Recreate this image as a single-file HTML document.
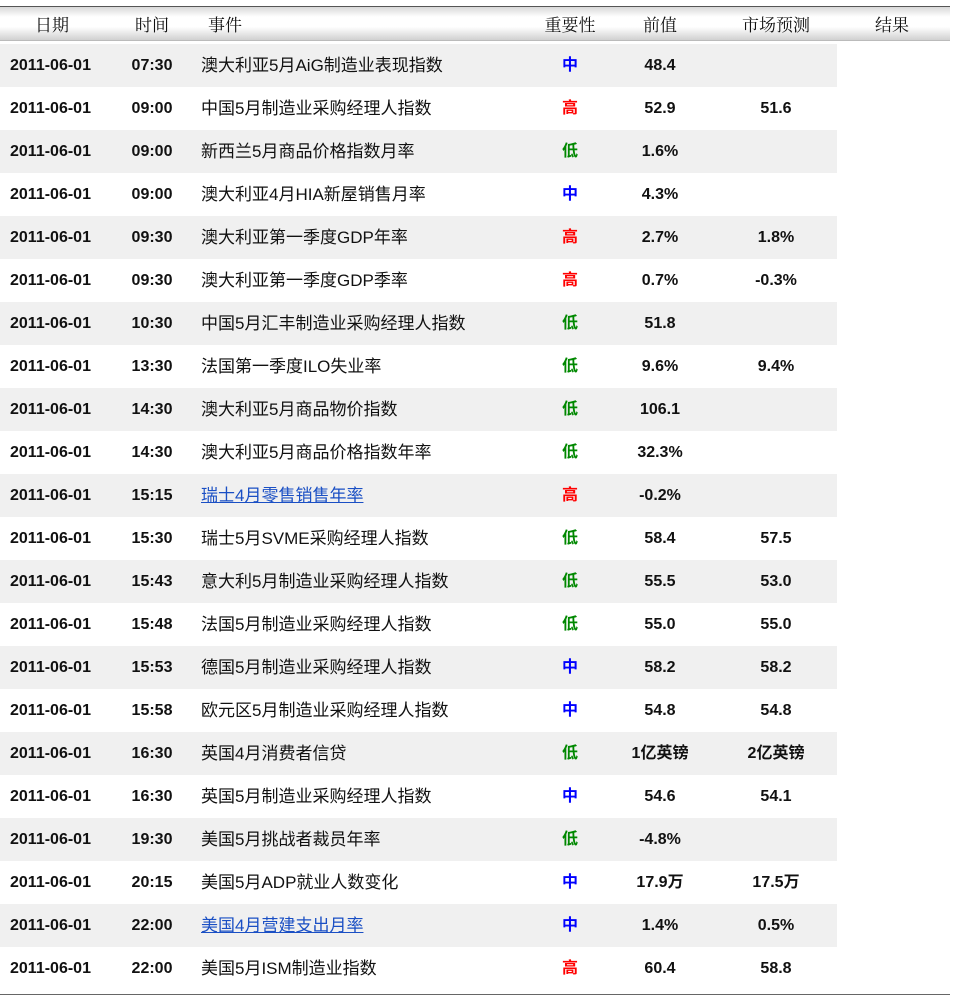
<!DOCTYPE html>
<html><head><meta charset="utf-8"><style>
body{margin:0;background:#fff;width:956px;height:1004px;overflow:hidden;position:relative;font-family:"Liberation Sans","Noto Sans CJK SC",sans-serif;}
.hd{position:absolute;left:0;top:6px;width:950px;height:33px;border-top:1px solid #555;border-bottom:1px solid #bbb;background:linear-gradient(#d8d8d8,#fff 30%,#fff 60%,#d0d0d0);}
.hd span{position:absolute;top:0;line-height:33px;font-family:"Noto Serif CJK SC","WenQuanYi Zen Hei",serif;font-size:17px;color:#111;transform:translateX(-50%);}
.row{position:absolute;left:0;height:43px;width:837px;}
.row.g{background:#f0f0f0;}
.row div{position:absolute;top:0;height:43px;line-height:43px;font-size:16px;color:#111;white-space:nowrap;}
.c{transform:translateX(-50%);font-weight:bold;}
.d{left:10px;font-weight:bold;}
.e{left:201px;font-size:17px!important;}
.e a{color:#1a4fc4;text-decoration:underline;}
.bot{position:absolute;left:0;top:994px;width:950px;border-top:1px solid #666;}
</style></head><body>
<div class="hd">
<span style="left:52px">日期</span><span style="left:152px">时间</span><span style="left:225px">事件</span>
<span style="left:570px">重要性</span><span style="left:660px">前值</span><span style="left:776px">市场预测</span><span style="left:892px">结果</span>
</div>
<div class="row g" style="top:44px"><div class="d">2011-06-01</div><div class="c" style="left:152px">07:30</div><div class="e">澳大利亚5月AiG制造业表现指数</div><div class="c" style="left:570px;color:#00f">中</div><div class="c" style="left:660px">48.4</div></div>
<div class="row" style="top:87px"><div class="d">2011-06-01</div><div class="c" style="left:152px">09:00</div><div class="e">中国5月制造业采购经理人指数</div><div class="c" style="left:570px;color:#f00">高</div><div class="c" style="left:660px">52.9</div><div class="c" style="left:776px">51.6</div></div>
<div class="row g" style="top:130px"><div class="d">2011-06-01</div><div class="c" style="left:152px">09:00</div><div class="e">新西兰5月商品价格指数月率</div><div class="c" style="left:570px;color:#080">低</div><div class="c" style="left:660px">1.6%</div></div>
<div class="row" style="top:173px"><div class="d">2011-06-01</div><div class="c" style="left:152px">09:00</div><div class="e">澳大利亚4月HIA新屋销售月率</div><div class="c" style="left:570px;color:#00f">中</div><div class="c" style="left:660px">4.3%</div></div>
<div class="row g" style="top:216px"><div class="d">2011-06-01</div><div class="c" style="left:152px">09:30</div><div class="e">澳大利亚第一季度GDP年率</div><div class="c" style="left:570px;color:#f00">高</div><div class="c" style="left:660px">2.7%</div><div class="c" style="left:776px">1.8%</div></div>
<div class="row" style="top:259px"><div class="d">2011-06-01</div><div class="c" style="left:152px">09:30</div><div class="e">澳大利亚第一季度GDP季率</div><div class="c" style="left:570px;color:#f00">高</div><div class="c" style="left:660px">0.7%</div><div class="c" style="left:776px">-0.3%</div></div>
<div class="row g" style="top:302px"><div class="d">2011-06-01</div><div class="c" style="left:152px">10:30</div><div class="e">中国5月汇丰制造业采购经理人指数</div><div class="c" style="left:570px;color:#080">低</div><div class="c" style="left:660px">51.8</div></div>
<div class="row" style="top:345px"><div class="d">2011-06-01</div><div class="c" style="left:152px">13:30</div><div class="e">法国第一季度ILO失业率</div><div class="c" style="left:570px;color:#080">低</div><div class="c" style="left:660px">9.6%</div><div class="c" style="left:776px">9.4%</div></div>
<div class="row g" style="top:388px"><div class="d">2011-06-01</div><div class="c" style="left:152px">14:30</div><div class="e">澳大利亚5月商品物价指数</div><div class="c" style="left:570px;color:#080">低</div><div class="c" style="left:660px">106.1</div></div>
<div class="row" style="top:431px"><div class="d">2011-06-01</div><div class="c" style="left:152px">14:30</div><div class="e">澳大利亚5月商品价格指数年率</div><div class="c" style="left:570px;color:#080">低</div><div class="c" style="left:660px">32.3%</div></div>
<div class="row g" style="top:474px"><div class="d">2011-06-01</div><div class="c" style="left:152px">15:15</div><div class="e"><a>瑞士4月零售销售年率</a></div><div class="c" style="left:570px;color:#f00">高</div><div class="c" style="left:660px">-0.2%</div></div>
<div class="row" style="top:517px"><div class="d">2011-06-01</div><div class="c" style="left:152px">15:30</div><div class="e">瑞士5月SVME采购经理人指数</div><div class="c" style="left:570px;color:#080">低</div><div class="c" style="left:660px">58.4</div><div class="c" style="left:776px">57.5</div></div>
<div class="row g" style="top:560px"><div class="d">2011-06-01</div><div class="c" style="left:152px">15:43</div><div class="e">意大利5月制造业采购经理人指数</div><div class="c" style="left:570px;color:#080">低</div><div class="c" style="left:660px">55.5</div><div class="c" style="left:776px">53.0</div></div>
<div class="row" style="top:603px"><div class="d">2011-06-01</div><div class="c" style="left:152px">15:48</div><div class="e">法国5月制造业采购经理人指数</div><div class="c" style="left:570px;color:#080">低</div><div class="c" style="left:660px">55.0</div><div class="c" style="left:776px">55.0</div></div>
<div class="row g" style="top:646px"><div class="d">2011-06-01</div><div class="c" style="left:152px">15:53</div><div class="e">德国5月制造业采购经理人指数</div><div class="c" style="left:570px;color:#00f">中</div><div class="c" style="left:660px">58.2</div><div class="c" style="left:776px">58.2</div></div>
<div class="row" style="top:689px"><div class="d">2011-06-01</div><div class="c" style="left:152px">15:58</div><div class="e">欧元区5月制造业采购经理人指数</div><div class="c" style="left:570px;color:#00f">中</div><div class="c" style="left:660px">54.8</div><div class="c" style="left:776px">54.8</div></div>
<div class="row g" style="top:732px"><div class="d">2011-06-01</div><div class="c" style="left:152px">16:30</div><div class="e">英国4月消费者信贷</div><div class="c" style="left:570px;color:#080">低</div><div class="c" style="left:660px">1亿英镑</div><div class="c" style="left:776px">2亿英镑</div></div>
<div class="row" style="top:775px"><div class="d">2011-06-01</div><div class="c" style="left:152px">16:30</div><div class="e">英国5月制造业采购经理人指数</div><div class="c" style="left:570px;color:#00f">中</div><div class="c" style="left:660px">54.6</div><div class="c" style="left:776px">54.1</div></div>
<div class="row g" style="top:818px"><div class="d">2011-06-01</div><div class="c" style="left:152px">19:30</div><div class="e">美国5月挑战者裁员年率</div><div class="c" style="left:570px;color:#080">低</div><div class="c" style="left:660px">-4.8%</div></div>
<div class="row" style="top:861px"><div class="d">2011-06-01</div><div class="c" style="left:152px">20:15</div><div class="e">美国5月ADP就业人数变化</div><div class="c" style="left:570px;color:#00f">中</div><div class="c" style="left:660px">17.9万</div><div class="c" style="left:776px">17.5万</div></div>
<div class="row g" style="top:904px"><div class="d">2011-06-01</div><div class="c" style="left:152px">22:00</div><div class="e"><a>美国4月营建支出月率</a></div><div class="c" style="left:570px;color:#00f">中</div><div class="c" style="left:660px">1.4%</div><div class="c" style="left:776px">0.5%</div></div>
<div class="row" style="top:947px"><div class="d">2011-06-01</div><div class="c" style="left:152px">22:00</div><div class="e">美国5月ISM制造业指数</div><div class="c" style="left:570px;color:#f00">高</div><div class="c" style="left:660px">60.4</div><div class="c" style="left:776px">58.8</div></div>
<div class="bot"></div>
</body></html>
